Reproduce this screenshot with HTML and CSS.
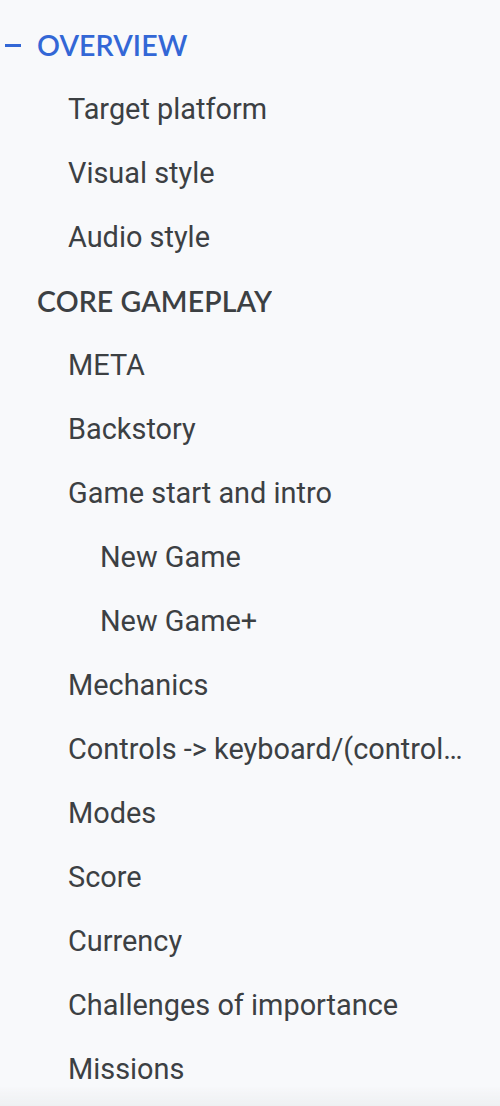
FILE: index.html
```html
<!DOCTYPE html>
<html>
<head>
<meta charset="utf-8">
<link rel="stylesheet" href="styles.css">
</head>
<body>
<nav class="outline">
  <div class="row h1 active"><span class="dash"></span><span class="label">OVERVIEW</span></div>
  <div class="row l2"><span class="label">Target platform</span></div>
  <div class="row l2"><span class="label">Visual style</span></div>
  <div class="row l2"><span class="label">Audio style</span></div>
  <div class="row h1"><span class="label">CORE GAMEPLAY</span></div>
  <div class="row l2"><span class="label">META</span></div>
  <div class="row l2"><span class="label">Backstory</span></div>
  <div class="row l2"><span class="label">Game start and intro</span></div>
  <div class="row l3"><span class="label">New Game</span></div>
  <div class="row l3"><span class="label">New Game+</span></div>
  <div class="row l2"><span class="label">Mechanics</span></div>
  <div class="row l2"><span class="label">Controls -&gt; keyboard/(controller) mapping</span></div>
  <div class="row l2"><span class="label">Modes</span></div>
  <div class="row l2"><span class="label">Score</span></div>
  <div class="row l2"><span class="label">Currency</span></div>
  <div class="row l2"><span class="label">Challenges of importance</span></div>
  <div class="row l2"><span class="label">Missions</span></div>
</nav>
<div class="fade"></div>
</body>
</html>
```
FILE: styles.css
```css
html, body {
  margin: 0;
  padding: 0;
  background: #f8f9fb;
  height: 1106px;
  overflow: hidden;
}
.outline {
  padding-top: 13px;
  padding-right: 36px;
  display: flex;
  flex-direction: column;
  font-family: Roboto, "Liberation Sans", sans-serif;
  color: #3c4043;
}
.row {
  height: 64px;
  display: flex;
  align-items: center;
  font-size: 28.9px;
  min-width: 0;
}
.label {
  white-space: nowrap;
  overflow: hidden;
  text-overflow: ellipsis;
  min-width: 0;
}
.h1 {
  padding-left: 37px;
  font-family: Lato, Roboto, sans-serif;
  font-weight: 600;
  font-size: 28.5px;
  letter-spacing: 0.1px;
}
.h1.active {
  padding-left: 5px;
  color: #3367d6;
}
.dash {
  width: 16px;
  height: 3px;
  background: #3367d6;
  margin-right: 16px;
  flex: none;
}
.l2 { padding-left: 68px; }
.l3 { padding-left: 100px; }
.fade {
  position: fixed;
  left: 0;
  right: 0;
  bottom: 0;
  height: 20px;
  background: linear-gradient(to bottom, rgba(241,243,244,0), #eef0f2);
  pointer-events: none;
}
```
